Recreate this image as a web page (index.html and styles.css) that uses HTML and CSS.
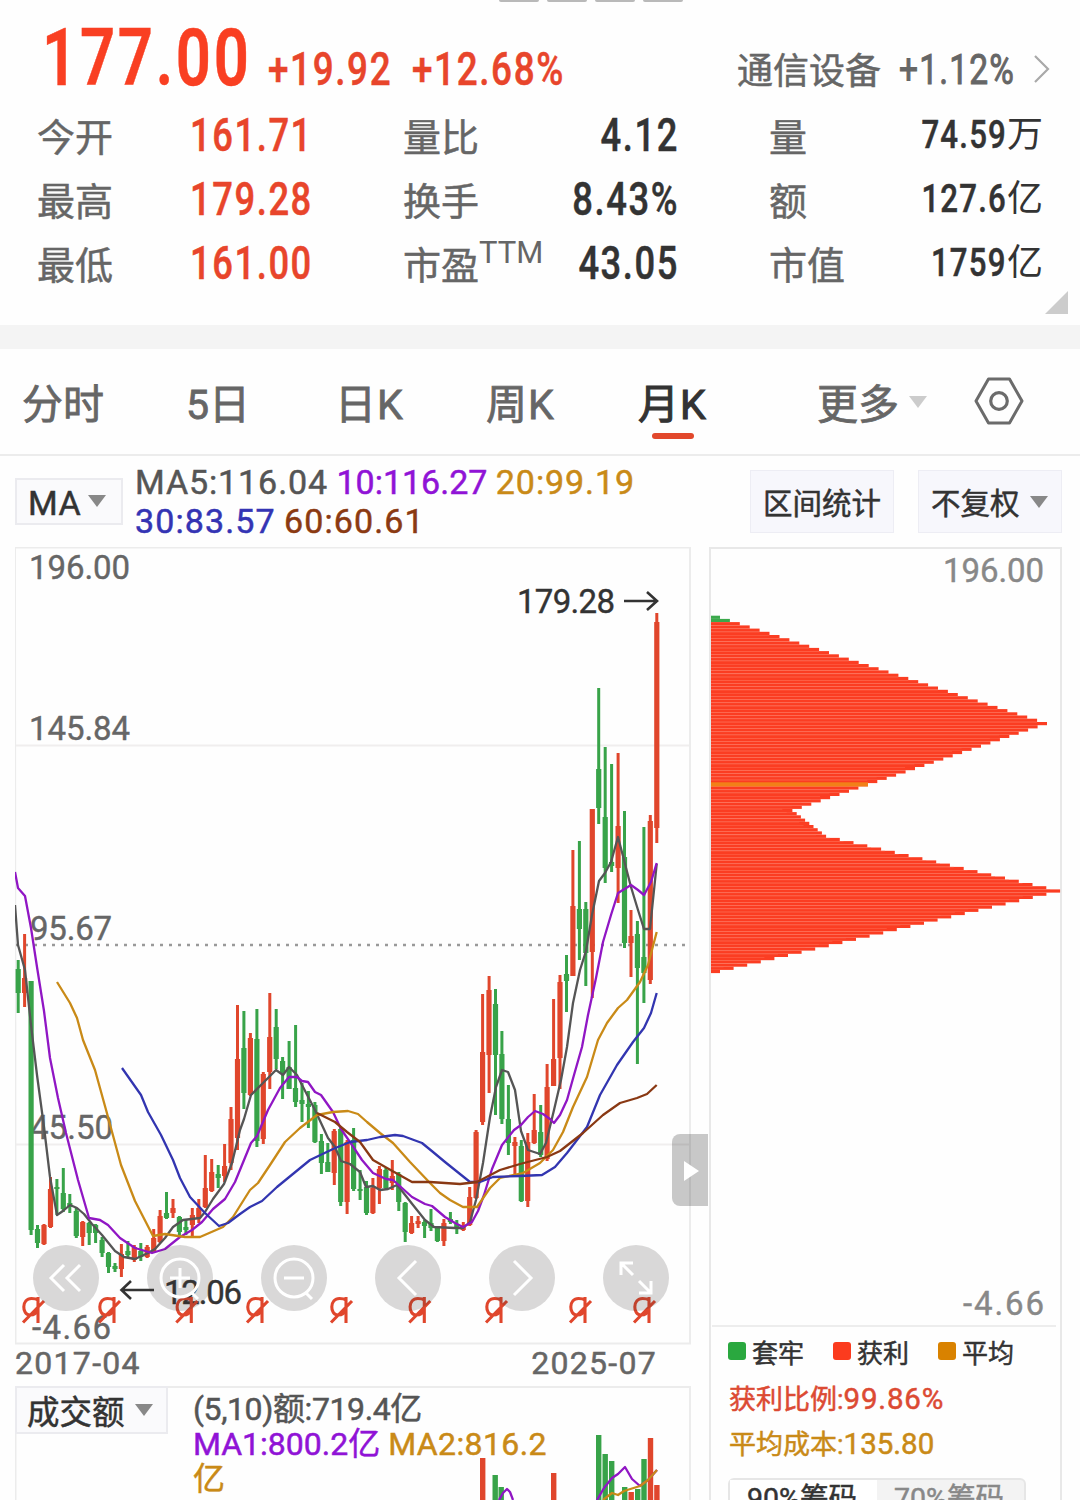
FILE: index.html
```html
<!DOCTYPE html>
<html lang="zh-CN">
<head>
    <meta charset="UTF-8">
    <meta name="viewport" content="width=device-width, initial-scale=1.0">
    <title>月K</title>
    <link rel="stylesheet" href="styles.css">
</head>
<body>
    <header class="quote">
        <div class="page-dots"><i></i><i></i><i></i><i></i></div>
        <div class="price-row">
            <div class="price"><span class="num">177.00</span></div>
            <div class="change"><span class="num">+19.92</span></div>
            <div class="percent"><span class="num">+12.68%</span></div>
            <div class="sector">通信设备</div>
            <div class="sector-change"><span class="num">+1.12%</span></div>
            <svg class="chevron" width="18" height="30" viewBox="0 0 18 30"><path d="M2 2 L15 15 L2 28" fill="none" stroke="#a9a9a9" stroke-width="2.2"/></svg>
        </div>
        <div class="stats">
            <span>今开</span><b class="up">161.71</b>
            <span>量比</span><b class="mid">4.12</b>
            <span>量</span><b class="unit"><em>74.59</em>万</b>
            <span>最高</span><b class="up">179.28</b>
            <span>换手</span><b class="mid">8.43%</b>
            <span>额</span><b class="unit"><em>127.6</em>亿</b>
            <span>最低</span><b class="up">161.00</b>
            <span>市盈<sup>TTM</sup></span><b class="mid">43.05</b>
            <span>市值</span><b class="unit"><em>1759</em>亿</b>
        </div>
        <div class="corner"></div>
    </header>

    <nav class="tabs">
        <a class="t1">分时</a>
        <a class="t2">5日</a>
        <a class="t3">日K</a>
        <a class="t4">周K</a>
        <a class="t5 active">月K</a>
        <a class="t6">更多<i class="caret light"></i></a>
        <svg class="setting" width="50" height="50" viewBox="0 0 50 50" fill="none" stroke="#6b6b6b">
            <path d="M14.500 3 H35.500 L48 25 L35.500 47 H14.500 L2 25 Z" stroke-width="3" stroke-linejoin="round"/>
            <circle cx="25" cy="25" r="8.300" stroke-width="3.200"/>
        </svg>
    </nav>

    <div class="toolbar">
        <div class="select">MA<i class="caret"></i></div>
        <div class="ma-list">
            <span class="ma5">MA5:116.04</span> <span class="ma10">10:116.27</span> <span class="ma20">20:99.19</span><br>
            <span class="ma30">30:83.57</span> <span class="ma60">60:60.61</span>
        </div>
        <div class="tool-btn">区间统计</div>
        <div class="tool-btn right">不复权<i class="caret"></i></div>
    </div>

    <main class="charts">
        <section class="left">
            <div class="kline">
                <svg id="kline" width="676" height="798" viewBox="15 547 676 798"></svg>
                <div class="controls">
                    <button><svg viewBox="-33 -33 66 66"><path d="M-2 -13 L-15 0 L-2 13 M14 -13 L1 0 L14 13"/></svg></button>
                    <button><svg viewBox="-33 -33 66 66"><circle cx="0" cy="0" r="19"/><path d="M-10 0 H10 M0 -10 V10 M12 15 L18 21"/></svg></button>
                    <button><svg viewBox="-33 -33 66 66"><circle cx="0" cy="0" r="19"/><path d="M-10 0 H10 M12 15 L18 21"/></svg></button>
                    <button><svg viewBox="-33 -33 66 66"><path d="M8 -17 L-9 0 L8 17"/></svg></button>
                    <button><svg viewBox="-33 -33 66 66"><path d="M-8 -17 L9 0 L-8 17"/></svg></button>
                    <button><svg viewBox="-33 -33 66 66"><path d="M-15 -3 V-15 H-3 M-15 -15 L-3 -3 M15 3 V15 H3 M15 15 L3 3"/></svg></button>
                </div>
                <div class="handle"></div>
            </div>
            <div class="dates"><span>2017-04</span><span>2025-07</span></div>
            <div class="volume">
                <svg id="volume" width="676" height="114" viewBox="15 1386 676 114"></svg>
                <div class="select vol">成交额<i class="caret"></i></div>
                <div class="vol-list">
                    <span class="ma5">(5,10)额:719.4亿</span><br>
                    <span class="ma10">MA1:800.2亿</span> <span class="ma20">MA2:816.2<br>亿</span>
                </div>
            </div>
        </section>
        <section class="chips">
            <svg id="chips" width="350" height="778" viewBox="711 549 350 778"></svg>
            <div class="legend">
                <span><i class="green"></i>套牢</span>
                <span><i class="red"></i>获利</span>
                <span><i class="gold"></i>平均</span>
            </div>
            <p class="profit">获利比例:<em>99.86%</em></p>
            <p class="cost">平均成本:<em>135.80</em></p>
            <div class="segment"><span class="on">90%筹码</span><span>70%筹码</span></div>
        </section>
    </main>
    <script src="chart.js"></script>
</body>
</html>
```

FILE: styles.css
```css
* {
    box-sizing: border-box;
}
body {
    margin: 0;
    width: 1080px;
    height: 1500px;
    overflow: hidden;
    background-color: #fefefe;
    color: #333;
    font-family: Roboto, "Noto Sans CJK SC", sans-serif;
    -webkit-text-stroke: .5px;
}
em, i {
    font-style: normal;
}
.quote {
    position: relative;
    height: 325px;
}
.page-dots {
    display: flex;
    gap: 8px;
    height: 3px;
    padding-left: 499px;
}
.page-dots i {
    width: 40px;
    height: 2px;
    background-color: #b9b9b9;
    border-radius: 0 0 8px 8px;
}
.num {
    display: inline-block;
    transform-origin: left center;
    white-space: nowrap;
}
.price-row {
    display: flex;
    height: 102px;
    padding-left: 42px;
    color: #f93f22;
    font-weight: 500;
}
.price {
    width: 226px;
    font-size: 80px;
    font-weight: 600;
    line-height: 110px;
    letter-spacing: 3.5px;
}
.price .num {
    transform: scaleX(.77);
}
.change, .percent {
    width: 144px;
    font-size: 45.5px;
    line-height: 133px;
    letter-spacing: 2px;
    color: #e8452b;
}
.change .num, .percent .num {
    transform: scaleX(.81);
}
.percent {
    width: 325px;
}
.sector {
    width: 162px;
    font-size: 36px;
    line-height: 138px;
    font-weight: 400;
    color: #666;
}
.sector-change {
    width: 134px;
    font-size: 43px;
    line-height: 133px;
    font-weight: 400;
    letter-spacing: 1.5px;
    color: #666;
}
.sector-change .num {
    transform: scaleX(.78);
    -webkit-text-stroke: 1px;
}
.chevron {
    margin-top: 51px;
}
.stats {
    display: grid;
    grid-template-columns: 153px 213px 110px 256px 127px 147px;
    grid-auto-rows: 64px;
    justify-content: start;
    padding-left: 37px;
    line-height: 60px;
}
.stats span {
    font-size: 38px;
    line-height: 66px;
    color: #666;
    white-space: nowrap;
}
.stats sup {
    font-size: 31px;
    line-height: 0;
    vertical-align: 16px;
    -webkit-text-stroke: 0;
}
.stats b {
    font-size: 46px;
    font-weight: 500;
    letter-spacing: 2px;
}
.stats .up {
    color: #e8452b;
    transform: scaleX(.79);
    transform-origin: left center;
}
.stats .mid {
    width: 166px;
    text-align: right;
    transform: scaleX(.79);
    transform-origin: right center;
}
.stats .unit {
    display: flex;
    justify-content: flex-end;
    font-size: 36px;
    font-weight: 400;
    letter-spacing: 0;
    line-height: 61px;
    -webkit-text-stroke: 0;
}
.stats .unit em {
    font-size: 39px;
    font-weight: 500;
    line-height: 60px;
    letter-spacing: 1.5px;
    transform: scaleX(.8);
    transform-origin: right center;
    -webkit-text-stroke: .5px;
}
.corner {
    position: absolute;
    right: 12px;
    top: 291px;
    border-left: 23px solid transparent;
    border-bottom: 23px solid #ccc;
}

.tabs {
    display: flex;
    height: 131px;
    border-top: 24px solid #f4f4f4;
    border-bottom: 2px solid #ececec;
    padding-left: 22px;
    font-size: 41px;
    line-height: 113px;
    color: #666;
}
.tabs a {
    white-space: nowrap;
    -webkit-text-stroke: .8px;
}
.t1 { width: 164px; }
.t2 { width: 149px; }
.t3 { width: 151px; }
.t4 { width: 152px; }
.t5 { width: 179px; }
.t6 { width: 157px; }
.t3, .t4, .t5 {
    letter-spacing: 1px;
}
.tabs .active {
    position: relative;
    color: #333;
    -webkit-text-stroke: 1.1px;
}
.t5.active::after {
    content: "";
    position: absolute;
    left: 14px;
    top: 84px;
    width: 42px;
    height: 6px;
    border-radius: 3px;
    background-color: #e2482c;
}
.setting {
    margin-top: 27px;
}
.caret {
    display: inline-block;
    border: 9px solid transparent;
    border-top: 12px solid #888;
    border-bottom: 0;
    margin-left: 7px;
    vertical-align: 8px;
}
.caret.light {
    border-top-color: #ccc;
    margin-left: 10px;
    vertical-align: 11px;
}

.toolbar {
    display: flex;
    height: 91px;
    padding-left: 15px;
}
.select {
    width: 108px;
    height: 47px;
    margin-top: 22px;
    padding-left: 11px;
    border: 2px solid #ebebef;
    background-color: #fafafc;
    font-size: 34px;
    line-height: 47px;
    letter-spacing: .6px;
    white-space: nowrap;
}
.ma-list {
    width: 614px;
    padding: 7px 0 0 12px;
    font-size: 34px;
    line-height: 39px;
    white-space: nowrap;
}
.ma5 { color: #555; }
.ma10 { color: #9013d6; }
.ma20 { color: #c98a17; }
.ma30 { color: #3434b4; }
.ma60 { color: #8b3a12; }
.ma-list .ma5, .ma-list .ma20 {
    letter-spacing: .9px;
}
.ma-list .ma30, .ma-list .ma60 {
    letter-spacing: 1.1px;
}
.tool-btn {
    width: 144px;
    height: 63px;
    margin: 14px 0 0 13px;
    padding-left: 12px;
    border: 1px solid #ededf4;
    background-color: #f7f7fc;
    font-size: 29.5px;
    line-height: 66px;
    white-space: nowrap;
}
.tool-btn.right {
    margin-left: 24px;
}
.tool-btn .caret {
    margin-left: 10px;
    vertical-align: 6px;
}

.charts {
    display: flex;
    padding-left: 15px;
}
.left {
    width: 694px;
}
.kline {
    position: relative;
    height: 798px;
}
svg {
    display: block;
    flex: none;
}
svg text {
    font-family: Roboto, "Noto Sans CJK SC", sans-serif;
    font-size: 33px;
}
.controls {
    position: absolute;
    left: 18px;
    top: 698px;
    display: flex;
    gap: 48px;
}
.controls button {
    width: 66px;
    height: 66px;
    padding: 0;
    border: 0;
    border-radius: 50%;
    background-color: rgba(60, 55, 55, .19);
}
.controls svg {
    fill: none;
    stroke: #fff;
    stroke-width: 3;
}
.handle {
    position: absolute;
    left: 657px;
    top: 587px;
    width: 36px;
    height: 72px;
    padding: 27px 0 0 12px;
    border-radius: 8px 0 0 8px;
    background-color: rgba(0, 0, 0, .21);
}
.handle::after {
    content: "";
    display: block;
    width: 0;
    border: 10px solid transparent;
    border-left: 15px solid #fff;
    border-right: 0;
}
.dates {
    display: flex;
    justify-content: space-between;
    width: 642px;
    height: 41px;
    font-size: 32px;
    line-height: 36px;
    letter-spacing: 1.3px;
    color: #666;
}
.volume {
    position: relative;
    display: flex;
    height: 114px;
}
.volume > svg {
    position: absolute;
    left: 0;
    top: 0;
}
.select.vol {
    position: relative;
    width: 153px;
    height: 48px;
    margin-top: 0;
    padding-left: 10px;
    font-size: 32.5px;
    line-height: 50px;
    letter-spacing: 0;
}
.select.vol .caret {
    margin-left: 10px;
}
.vol-list {
    position: relative;
    padding: 6px 0 0 25px;
    font-size: 32px;
    line-height: 35px;
    white-space: nowrap;
}
.vol-list .ma5 {
    letter-spacing: -.4px;
}
.vol-list .ma20 {
    letter-spacing: .4px;
}

.chips {
    width: 353px;
    height: 953px;
    border: 2px solid #e8e8e8;
    border-bottom: 0;
}
.legend {
    display: flex;
    gap: 29px;
    padding: 8px 0 0 17px;
    font-size: 26px;
    line-height: 38px;
}
.legend span {
    display: flex;
    width: 76px;
    white-space: nowrap;
}
.legend i {
    flex: none;
    width: 18px;
    height: 18px;
    margin: 7px 6px 0 0;
    border-radius: 3px;
}
.green { background-color: #2aa83f; }
.red { background-color: #fb3b1e; }
.gold { background-color: #d98200; }
.profit, .cost {
    margin: 0;
    padding-left: 18px;
    font-size: 27px;
    line-height: 44px;
    color: #dc4a33;
}
.profit {
    margin-top: 4px;
}
.cost {
    color: #c98a17;
}
.profit em, .cost em {
    font-size: 29.5px;
}
.profit em {
    letter-spacing: .8px;
}
.segment {
    display: flex;
    width: 298px;
    height: 50px;
    margin: 11px 0 0 17px;
    border: 2px solid #e6e6e6;
    border-radius: 6px;
    font-size: 28.5px;
    line-height: 38px;
    background-color: #f3f3f3;
}
.segment span {
    width: 149px;
    padding-left: 17px;
    color: #888;
}
.segment .on {
    background-color: #fff;
    color: #333;
}
```

FILE: chart.js
```js
const RED = '#e0462c';
const GREEN = '#38a349';

// type, high, body top, body bottom, low
const candles = [
    ['g',960,969,993,1013],['r',934,978,993,1007],['g',981,981,1230,1235],['g',1225,1229,1243,1248],['r',1224,1225,1244,1245],
    ['r',1177,1189,1227,1228],['g',1179,1187,1189,1215],['g',1168,1193,1209,1212],['g',1194,1203,1207,1213],['g',1208,1211,1236,1238],
    ['r',1221,1222,1237,1246],['g',1222,1223,1233,1245],['g',1224,1225,1233,1243],['g',1237,1240,1253,1257],['g',1252,1253,1267,1273],
    ['g',1263,1266,1269,1272],['r',1244,1254,1269,1277],['g',1241,1251,1255,1257],['r',1245,1247,1260,1262],['g',1243,1251,1257,1261],
    ['r',1245,1247,1257,1258],['r',1229,1238,1252,1253],['r',1210,1216,1242,1243],['g',1192,1213,1218,1219],['r',1199,1208,1213,1218],
    ['g',1216,1217,1232,1235],['g',1220,1227,1230,1235],['r',1208,1215,1225,1238],['r',1199,1208,1218,1223],['r',1155,1188,1207,1208],
    ['r',1159,1172,1191,1192],['g',1165,1174,1178,1188],['r',1144,1166,1176,1182],['r',1107,1119,1163,1170],['r',1005,1059,1138,1150],
    ['g',1011,1048,1093,1109],['r',1033,1038,1095,1096],['g',1009,1039,1141,1147],['r',1072,1074,1139,1144],['r',993,1037,1072,1089],
    ['g',1009,1027,1059,1069],['g',1057,1061,1073,1099],['g',1041,1067,1089,1089],['g',1025,1088,1102,1107],['g',1083,1100,1104,1122],
    ['g',1091,1104,1107,1128],['g',1102,1105,1142,1143],['g',1134,1141,1163,1174],['g',1143,1162,1172,1172],['r',1129,1131,1173,1185],
    ['g',1127,1129,1202,1206],['r',1140,1142,1202,1214],['g',1128,1140,1189,1191],['g',1170,1189,1191,1200],['g',1181,1187,1213,1215],
    ['r',1178,1188,1213,1214],['r',1166,1169,1188,1204],['g',1168,1170,1188,1189],['r',1160,1176,1183,1190],['g',1172,1174,1202,1211],
    ['g',1202,1203,1232,1242],['r',1216,1223,1233,1234],['r',1216,1221,1224,1228],['g',1220,1222,1226,1238],['g',1209,1223,1228,1231],
    ['g',1226,1227,1241,1242],['r',1219,1223,1241,1246],['g',1212,1219,1222,1224],['g',1220,1224,1229,1234],['r',1222,1226,1230,1231],
    ['r',1187,1197,1225,1226],['r',1130,1132,1198,1199],['r',994,1052,1122,1125],['r',976,990,1055,1093],['g',989,1004,1055,1115],
    ['g',1031,1054,1119,1124],['g',1085,1119,1143,1155],['r',1137,1142,1146,1175],['g',1140,1146,1201,1202],['r',1133,1142,1201,1207],
    ['r',1094,1130,1143,1144],['g',1105,1132,1155,1157],['r',1064,1087,1159,1161],['r',999,1059,1086,1086],['r',975,982,1058,1089],
    ['g',955,974,981,1012],['r',850,906,976,976],['g',841,909,929,960],['g',902,909,953,986],['r',809,809,952,998],
    ['g',688,769,808,824],['g',747,817,868,883],['g',764,862,866,872],['r',753,826,868,903],['g',811,857,943,948],
    ['r',910,936,943,977],['g',921,934,968,1064],['g',827,957,973,1003],['r',815,821,980,984],['r',613,622,828,843]
];

const averages = [
    ['#555555', '15,905 18,945 25,970 31,1025 37,1075 44,1127 50,1177 57,1215 63,1211 70,1205 77,1208 84,1214 92,1224 102,1235 115,1251 124,1257 135,1259 148,1253 155,1249 165,1238 173,1227 183,1220 200,1218 205,1212 213,1199 224,1184 232,1163 240,1130 244,1119 251,1095 262,1084 276,1070 283,1075 289,1067 297,1075 302,1085 315,1110 328,1138 335,1147 341,1161 350,1164 360,1172 366,1187 373,1186 380,1190 388,1189 397,1185 402,1191 413,1205 425,1220 434,1227 455,1228 463,1228 470,1222 476,1200 483,1163 490,1117 496,1087 502,1070 508,1072 515,1090 521,1131 528,1150 540,1154 546,1143 554,1110 561,1080 567,1047 573,1003 580,970 586,951 592,915 599,881 605,873 611,862 618,837 624,860 631,887 638,910 644,929 650,929 656.7,864'],
    ['#9016c4', '15,872 18,888 25,896 31,928 37,967 44,1011 50,1058 58,1098 66,1133 78,1180 89,1218 100,1220 108,1225 120,1238 135,1248 152,1253 165,1249 180,1237 192,1230 202,1222 213,1209 225,1199 235,1182 251,1143 257,1136 268,1110 280,1088 289,1077 297,1077 302,1081 308,1082 315,1092 321,1095 333,1112 341,1129 352,1145 362,1160 373,1173 386,1179 393,1180 402,1188 412,1197 425,1204 432,1206 445,1217 455,1223 463,1227 472,1222 478,1211 484,1195 492,1169 502,1145 514,1130 521,1125 528,1117 535,1111 543,1114 550,1119 554,1123 560,1115 567,1100 574,1075 582,1047 588,1015 596,978 603,942 611,915 618,893 631,885 638,890 644,895 651,882 656.7,863'],
    ['#c98a17', '57,982 70,1003 77,1018 83,1040 95,1070 108,1117 121,1165 135,1201 153,1236 165,1234 185,1237 200,1237 223,1227 233,1217 250,1190 258,1183 270,1165 285,1142 300,1128 317,1115 333,1112 348,1111 358,1114 367,1122 380,1133 393,1143 410,1162 430,1183 440,1193 450,1200 463,1207 477,1207 490,1188 500,1178 523,1173 540,1163 553,1150 563,1132 573,1107 587,1077 598,1040 607,1023 618,1008 627,1000 640,982 648,965 656.7,932'],
    ['#3235b0', '122,1068 141,1095 148,1112 161,1135 173,1160 180,1178 190,1197 205,1213 219,1226 228,1223 240,1214 250,1207 262,1201 277,1187 310,1160 333,1149 350,1142 367,1140 380,1137 395,1135 403,1136 422,1143 433,1152 445,1162 460,1174 470,1182 480,1182 493,1177 520,1176 542,1175 555,1167 567,1153 587,1127 600,1095 617,1065 633,1042 644,1028 651,1013 656.7,993'],
    ['#893813', '317,1113 335,1122 347,1132 360,1142 373,1160 387,1168 412,1182 430,1182 460,1184 477,1182 500,1170 520,1164 547,1157 560,1151 583,1133 603,1115 620,1103 637,1098 647,1094 656.7,1085']
];

function rect(x, y, w, h, color) {
    return `<rect x="${x.toFixed(1)}" y="${y.toFixed(1)}" width="${w.toFixed(1)}" height="${h.toFixed(1)}" fill="${color}"/>`;
}

function line(points, color) {
    return `<polyline points="${points}" fill="none" stroke="${color}" stroke-width="2.3" stroke-linejoin="round"/>`;
}

function label(x, y, text, color, width) {
    return `<text x="${x}" y="${y}" fill="${color}" stroke="${color}" stroke-width=".4" textLength="${width}">${text}</text>`;
}

function drawKline() {
    let s = '<path d="M15 547.5 H690 V1343.5 H15.500 Z" fill="none" stroke="#ececec" stroke-width="2"/>';
    s += '<path d="M16 745.5 H689 M16 1144.5 H689" stroke="#f0eeee" stroke-width="2"/>';
    s += '<path d="M16 945 H688" stroke="#999" stroke-width="2.6" stroke-dasharray="3 6"/>';

    s += label(29, 579, '196.00', '#666', 101);
    s += label(29, 740, '145.84', '#666', 101);
    s += label(30, 940, '95.67', '#666', 82);
    s += label(30, 1139, '45.50', '#666', 83);
    s += label(32, 1339, '-4.66', '#666', 79);

    candles.forEach((c, i) => {
        const x = 18.2 + i * 6.45;
        const color = c[0] === 'r' ? RED : GREEN;
        s += rect(x - 1.5, c[1], 3, c[4] - c[1], color);
        s += rect(x - 2.6, c[2], 5.2, c[3] - c[2], color);
    });
    averages.forEach(a => {
        s += line(a[1], a[0]);
    });

    s += label(517, 613, '179.28', '#333', 98);
    s += label(164, 1304, '12.06', '#333', 78);
    s += '<path d="M624 601 H656 M647 592 L657 601 L647 610 M154 1290 H123 M131 1281 L121.500 1290 L131 1299" fill="none" stroke="#333" stroke-width="2.600"/>';

    // dividend marks
    [22, 98, 175.3, 246, 330, 408.3, 485, 569, 633].forEach(x => {
        s += `<path transform="translate(${x} 1297)" d="M16 0 V26 M16 3 C14 1.500 12 1.500 9.500 1.500 C-.5 1.500 -.5 18 8 18 C12 18 15 15 16 11 M1 25.500 L22 4" fill="none" stroke="#e0462c" stroke-width="3.100"/>`;
    });
    document.getElementById('kline').innerHTML = s;
}

function drawChips() {
    let s = '';
    for (let k = 0; k <= 110; k++) {
        let w;
        if (k <= 33) w = 10 + k * 9.91;
        else if (k <= 60) w = 337 - (k - 33) * 9.43;
        else if (k <= 68) w = 82.5 + (k - 60) * 4.2;
        else if (k <= 85) w = 116 + (k - 68) * 13.77;
        else w = 350 - (k - 85) * 13.6;
        const y = 615.7 + k * 3.22;
        const color = k < 2 ? '#3ba94c' : '#fb3d22';
        s += rect(710, y, w, 3.2, color);
        if (k > 2) s += rect(710, y, w - 10, .5, '#ff6a50');
    }
    s += rect(710, 782.3, 158, 4.2, '#f28018');
    s += label(943, 582, '196.00', '#888', 101);
    s += label(963, 1315, '-4.66', '#888', 81);
    s += '<path d="M712 1326 H1056" stroke="#ededed" stroke-width="2"/>';
    document.getElementById('chips').innerHTML = s;
}

function drawVolume() {
    const bars = [
        [480,1458,RED],[492.5,1475,GREEN],[498.5,1487,GREEN],[551,1473,RED],[596,1435,GREEN],[602.5,1454,GREEN],[609,1461,GREEN],
        [622,1487,GREEN],[628.5,1492,RED],[635,1489,GREEN],[641.3,1459,GREEN],[647.8,1438,RED],[654.2,1485,RED]
    ];
    let s = '<path d="M15.500 1500 V1387 H690 V1500" fill="none" stroke="#ececec" stroke-width="2"/>';
    bars.forEach(b => {
        s += rect(b[0], b[1], 5.4, 1500 - b[1], b[2]);
    });
    s += line('499,1500 503,1493 507,1489 510,1492 513,1500', '#9016c4');
    s += line('597,1500 604,1488 612,1478 618,1474 625,1467 632,1479 640,1486 648,1480 657,1470', '#9016c4');
    s += line('603,1500 612,1493 618,1495 624,1491 640,1486 648,1480 657,1470', '#c98a17');
    document.getElementById('volume').innerHTML = s;
}

drawKline();
drawChips();
drawVolume();
```
